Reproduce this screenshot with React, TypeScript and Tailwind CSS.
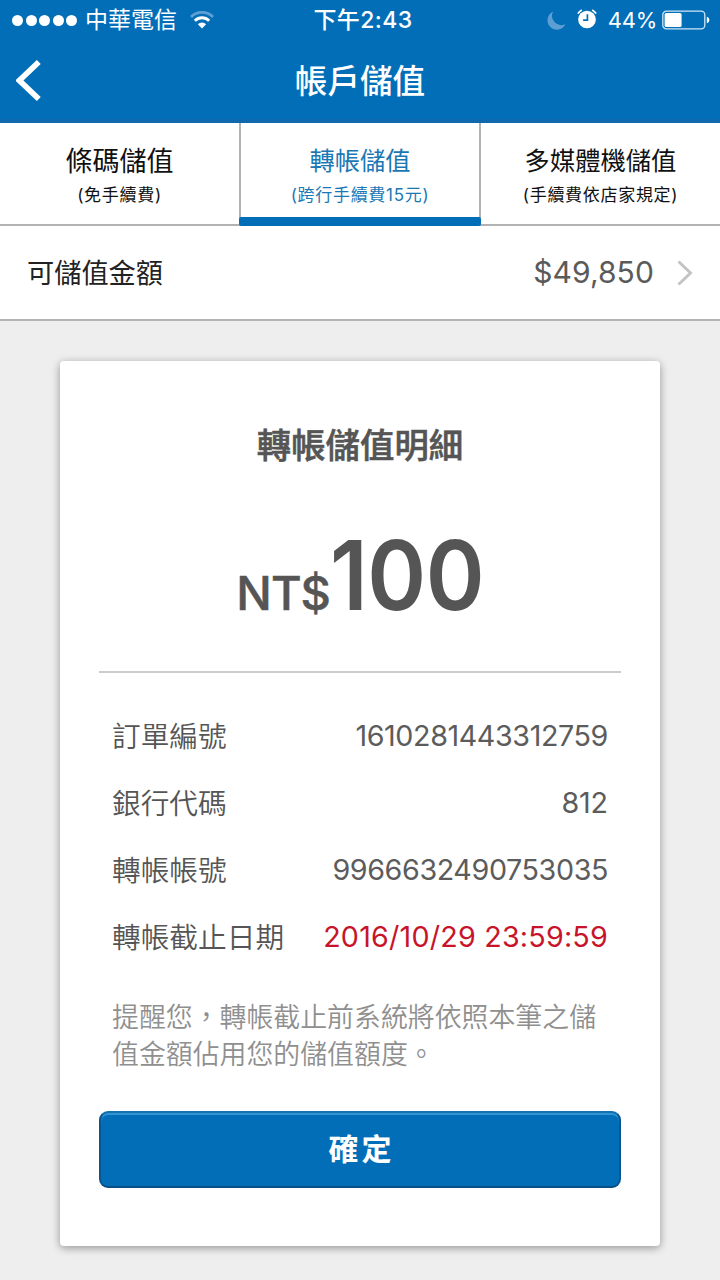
import { ReactNode } from 'react'

interface Tab {
  label: string
  note: string
  labelClass: string
}

const TABS: Tab[] = [
  { label: '條碼儲值', note: '(免手續費)', labelClass: 'text-[27px] leading-[39px]' },
  { label: '轉帳儲值', note: '(跨行手續費15元)', labelClass: 'text-[25.3px] leading-[38px] mb-px' },
  { label: '多媒體機儲值', note: '(手續費依店家規定)', labelClass: 'text-[25.3px] leading-[38px] mb-px' },
]

const ACTIVE_TAB = 1

const DETAILS = [
  { label: '訂單編號', value: '1610281443312759', valueClass: 'tracking-[-0.4px] text-[#5c5c5c]' },
  { label: '銀行代碼', value: '812', valueClass: 'tracking-[-0.1px] text-[#5c5c5c]' },
  { label: '轉帳帳號', value: '9966632490753035', valueClass: 'tracking-[-0.4px] text-[#5c5c5c]' },
  { label: '轉帳截止日期', value: '2016/10/29 23:59:59', valueClass: 'tracking-[0.2px] text-[#c8142a]' },
]

function StatusBar() {
  return (
    <div className="grid h-10 grid-cols-3 items-center pr-[10px] pl-3 text-[23px] leading-10 text-white">
      <div className="flex items-center">
        <div className="flex gap-[2.5px]">
          {[0, 1, 2, 3, 4].map((dot) => (
            <span key={dot} className="h-[11px] w-[11px] rounded-full bg-white" />
          ))}
        </div>
        <span className="ml-[8px]">中華電信</span>
        <WifiIcon />
      </div>
      <div className="pl-[4px] text-center font-medium tracking-[0.4px]">下午2:43</div>
      <div className="flex items-center justify-end">
        <MoonIcon />
        <AlarmIcon />
        <span className="ml-[11px] text-[22px] tracking-[-0.3px]">44%</span>
        <BatteryIcon />
      </div>
    </div>
  )
}

function WifiIcon() {
  return (
    <svg className="ml-[13px]" width="24" height="18" viewBox="0 0 24 18" fill="none">
      <path d="M1 5.9 A15.5 15.5 0 0 1 23 5.9" stroke="#5d9fd3" strokeWidth="2.8" />
      <path d="M4.8 9.8 A10 10 0 0 1 19.2 9.8" stroke="#fff" strokeWidth="2.8" />
      <path d="M12 17.5 L7.9 13.2 A5.8 5.8 0 0 1 16.1 13.2 Z" fill="#fff" />
    </svg>
  )
}

function MoonIcon() {
  return (
    <svg width="19" height="19" viewBox="0 0 19 19">
      <path d="M6.2 0.6 A9.4 9.4 0 1 0 18.4 13.2 A9.2 9.2 0 0 1 6.2 0.6 Z" fill="#5d9fd3" />
    </svg>
  )
}

function AlarmIcon() {
  return (
    <svg className="mb-[2px] ml-[11px]" width="20" height="20" viewBox="0 0 19 19" fill="none">
      <circle cx="9.5" cy="10" r="8.4" fill="#fff" />
      <path d="M0.8 4.4 A10.5 10.5 0 0 1 4.6 0.9 M18.2 4.4 A10.5 10.5 0 0 0 14.4 0.9" stroke="#fff" strokeWidth="1.6" />
      <path d="M9.9 5 V10.6 H5.8" stroke="#036eb8" strokeWidth="1.6" />
    </svg>
  )
}

function BatteryIcon() {
  return (
    <svg className="ml-[5px]" width="48" height="20" viewBox="0 0 48 20" fill="none">
      <rect x="0.8" y="1.2" width="42" height="17.6" rx="3.6" stroke="#cfe6f5" strokeWidth="1.3" />
      <rect x="2.6" y="3" width="17" height="14" rx="1.6" fill="#fff" />
      <path d="M44.8 6.8 C48.2 7.6 48.2 12.4 44.8 13.2 Z" fill="#fff" />
    </svg>
  )
}

function NavBar({ title }: { title: string }) {
  return (
    <div className="grid h-[83px] grid-cols-[60px_1fr_60px] border-b-4 border-[#0e69ae] text-white">
      <button type="button" className="flex items-start pt-[20px] pl-4">
        <svg width="26" height="41" viewBox="0 0 26 41" fill="none">
          <path d="M22.8 2 L3.4 20.5 L22.8 39" stroke="#fff" strokeWidth="5.6" />
        </svg>
      </button>
      <h1 className="text-center text-[32.6px] leading-[83px] font-medium">{title}</h1>
    </div>
  )
}

function TabBar() {
  return (
    <div className="grid h-[103px] grid-cols-[239px_242px_239px] bg-white">
      {TABS.map((tab, index) => {
        const active = index === ACTIVE_TAB
        return (
          <button
            key={tab.label}
            type="button"
            className={`flex flex-col items-center pt-[19px] ${
              active
                ? 'border-x-2 border-[#b0b2b4] text-[#1c78b4]'
                : 'border-b-2 border-[#b0b2b4] text-[#111111]'
            }`}
          >
            <span className={tab.labelClass}>{tab.label}</span>
            <span className="text-[17px] leading-[29px] tracking-[0.7px]">{tab.note}</span>
            {active && <span className="mt-[7px] h-[9px] w-[242px] shrink-0 rounded-[2px] bg-[#036eb8]" />}
          </button>
        )
      })}
    </div>
  )
}

function LimitRow() {
  return (
    <div className="flex h-[95px] items-center border-b-2 border-[#b4b4b4] bg-white px-[27px]">
      <span className="flex-1 pt-1 text-[27.2px] text-[#222222]">可儲值金額</span>
      <span className="text-[30px] tracking-[0.1px] text-[#5a5a5a]">$49,850</span>
      <svg className="ml-[23px]" width="16" height="26" viewBox="0 0 16 26" fill="none">
        <path d="M1.5 1.5 L13.5 13 L1.5 24.5" stroke="#c4c4c4" strokeWidth="3" />
      </svg>
    </div>
  )
}

function Card({ children }: { children: ReactNode }) {
  return (
    <div className="mx-auto mt-[40px] h-[885px] w-[600px] rounded-[4px] bg-white px-[39px] shadow-[0_2px_8px_rgba(0,0,0,0.38)]">
      {children}
    </div>
  )
}

export default function App() {
  return (
    <div
      lang="zh-TW"
      className="h-[1280px] w-[720px] overflow-hidden bg-[#eeeeee] font-[Inter,'Noto_Sans_CJK_TC',sans-serif]"
    >
      <header className="bg-[#036eb8]">
        <StatusBar />
        <NavBar title="帳戶儲值" />
      </header>
      <TabBar />
      <LimitRow />
      <Card>
        <h2 className="pt-[60px] text-center text-[34.4px] leading-[50px] font-medium text-[#555555] [-webkit-text-stroke:0.6px_#555555]">
          轉帳儲值明細
        </h2>
        <div className="flex h-[202px] items-baseline justify-center border-b-2 border-[#cccccc] pt-[46px] leading-[116px] font-medium text-[#555555]">
          <span className="text-[47px] tracking-[-1px] [-webkit-text-stroke:0.5px_#555555]">NT$</span>
          <span className="-mr-[12px] origin-left scale-x-[0.93] text-[96px] font-[560] tracking-[-0.5px]">100</span>
        </div>
        <dl className="px-[13px] pt-[30px]">
          {DETAILS.map((item) => (
            <div key={item.label} className="flex h-[67px] items-center justify-between">
              <dt className="text-[28.7px] font-[350] text-[#555555]">{item.label}</dt>
              <dd className={`pb-[2px] text-[28.7px] ${item.valueClass}`}>{item.value}</dd>
            </div>
          ))}
        </dl>
        <p className="mt-[28px] px-[13px] text-[26.9px] leading-[37px] font-[350] text-[#8f8f8f]">
          提醒您，轉帳截止前系統將依照本筆之儲
          <br />
          值金額佔用您的儲值額度。
        </p>
        <button
          type="button"
          className="mt-[38px] h-[77px] w-full rounded-[9px] border-2 border-t-[#1572b0] border-r-[#0a5590] border-b-[#0a4f86] border-l-[#0a5590] bg-[#036eb8] pl-[3px] text-[30px] font-bold tracking-[3px] text-white shadow-[inset_0_2px_0_#2f95d3]"
        >
          確定
        </button>
      </Card>
    </div>
  )
}
